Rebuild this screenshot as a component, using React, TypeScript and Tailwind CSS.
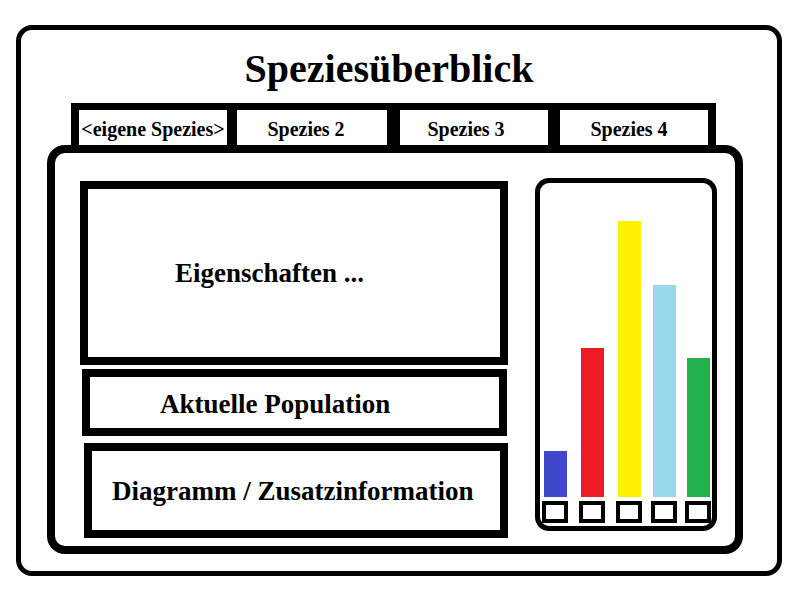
const tabs = [
  { label: '<eigene Spezies>', cls: 'border-l-8 border-r-[10px] w-[166px] pr-0' },
  { label: 'Spezies 2', cls: 'border-r-[13px] w-[163px] pr-[12px]' },
  { label: 'Spezies 3', cls: 'border-r-[12px] w-[160px] pr-[16px]' },
  { label: 'Spezies 4', cls: 'border-r-8 w-[156px] pr-[10px]' },
]

// bar heights in px, colours from the paint palette
const bars = [
  { h: 46, color: 'bg-[#3f48cc]', gap: 'ml-[2px]' },
  { h: 149, color: 'bg-[#ed1c24]', gap: 'ml-[11px]' },
  { h: 276, color: 'bg-[#fff200]', gap: 'ml-[11px]' },
  { h: 212, color: 'bg-[#99d9ea]', gap: 'ml-[9px]' },
  { h: 139, color: 'bg-[#22b14c]', gap: 'ml-[8px]' },
]

function Chart() {
  return (
    <div className="ml-[27px] mt-[25px] w-[182px] h-[353px] border-[5px] border-black rounded-[14px] flex items-end pb-[3px]">
      {bars.map((b, i) => (
        <div key={i} className={`${b.gap} w-[26px] flex flex-col items-center`}>
          <div className={`w-[23px] ${b.color}`} style={{ height: b.h }} />
          <div className="mt-[4px] w-[26px] h-[22px] border-4 border-black" />
        </div>
      ))}
    </div>
  )
}

export default function App() {
  return (
    <div className="w-[800px] h-[600px] bg-white pt-[25px] pl-[16px] text-black font-['Liberation_Serif','Times_New_Roman',serif] font-bold">
      <div className="w-[766px] h-[551px] border-[5px] border-black rounded-[16px]">
        <h1 className="pt-[16px] mb-[11px] text-[40px] leading-[46px] text-center pr-[20px]">Speziesüberblick</h1>

        <div className="ml-[50px] flex">
          {tabs.map((t) => (
            <div
              key={t.label}
              className={`${t.cls} h-[42px] border-t-[7px] border-black flex items-center justify-center whitespace-nowrap pt-[3px] text-[20px] leading-none`}
            >
              {t.label}
            </div>
          ))}
        </div>

        <div className="ml-[26px] w-[696px] h-[409px] border-8 border-black rounded-[18px] flex">
          <div className="ml-[25px] mt-[28px] flex flex-col text-[27px] leading-none">
            <div className="w-[428px] h-[184px] border-8 border-black flex items-center pl-[87px]">
              Eigenschaften ...
            </div>
            <div className="ml-[2px] mt-[4px] w-[425px] h-[67px] border-8 border-black flex items-center pl-[70px] pt-[3px]">
              Aktuelle Population
            </div>
            <div className="ml-[4px] mt-[7px] w-[424px] h-[95px] border-8 border-black flex items-center pl-[20px] pt-[2px]">
              Diagramm / Zusatzinformation
            </div>
          </div>
          <Chart />
        </div>
      </div>
    </div>
  )
}
